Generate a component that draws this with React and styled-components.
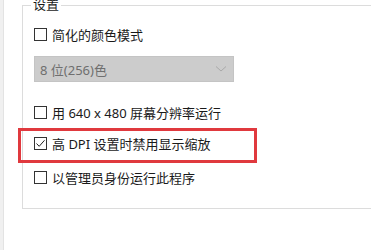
import React from 'react';
import styled, { createGlobalStyle } from 'styled-components';

const GlobalStyle = createGlobalStyle`
  html, body {
    margin: 0;
    padding: 0;
    background: #ffffff;
    overflow: hidden;
  }
  body {
    font-family: "Noto Sans", "Noto Sans CJK SC", sans-serif;
    font-size: 13px;
    color: #1a1a1a;
  }
`

const Page = styled.div`
  display: flex;
  width: 371px;
  height: 250px;
  overflow: hidden;
`

const Strip = styled.div`
  width: 3px;
  flex: none;
  background: #f0f0f0;
  border-right: 1px solid #e3e3e3;
`

const Main = styled.div`
  flex: 1;
  padding-left: 18px;
`

const Group = styled.div`
  position: relative;
  box-sizing: border-box;
  margin-top: 5px;
  width: 420px;
  height: 204px;
  border: 1px solid #dcdcdc;
  padding: 18px 0 0 11px;
`

const Legend = styled.span`
  position: absolute;
  top: -10px;
  left: 8px;
  padding: 0 2px;
  background: #ffffff;
  line-height: 17px;
`

const Row = styled.label`
  display: flex;
  align-items: center;
  gap: 5px;
  height: 20px;
  margin-top: ${({ gap }) => gap || 0}px;
  white-space: nowrap;
`

const Box = styled.span`
  box-sizing: border-box;
  display: flex;
  align-items: center;
  justify-content: center;
  width: 13px;
  height: 13px;
  border: 1px solid #333333;
  background: #ffffff;
  flex: none;
`

const Select = styled.div`
  box-sizing: border-box;
  display: flex;
  align-items: center;
  justify-content: space-between;
  width: 200px;
  height: 26px;
  margin-top: 12px;
  padding: 0 6px 0 5px;
  background: #cccccc;
  border: 1px solid #c4c4c4;
  color: #6f6f6f;
`

const Highlight = styled.div`
  box-sizing: border-box;
  width: 239px;
  margin: 6px 0 0 -16px;
  padding: 2px 0 7px 13px;
  border: 3px solid #e0393e;
`

const CheckBox = ({ checked }) => (
  <Box>
    {checked && (
      <svg width="11" height="11" viewBox="0 0 11 11">
        <path d="M1.5 5.5 L4.2 8.3 L9.5 2.3" fill="none" stroke="#222" strokeWidth="1" />
      </svg>
    )}
  </Box>
)

const Option = ({ checked, gap, children }) => (
  <Row gap={gap}>
    <CheckBox checked={checked} />
    <span>{children}</span>
  </Row>
)

export default function App() {
  return (
    <>
      <GlobalStyle />
      <Page>
        <Strip />
        <Main>
          <Group>
            <Legend>设置</Legend>
            <Option>简化的颜色模式</Option>
            <Select>
              <span>8 位(256)色</span>
              <svg width="12" height="8" viewBox="0 0 12 8">
                <path d="M1 1.5 L6 6 L11 1.5" fill="none" stroke="#a9a9a9" strokeWidth="1" />
              </svg>
            </Select>
            <Option gap={20}>用 640 x 480 屏幕分辨率运行</Option>
            <Highlight>
              <Option checked>高 DPI 设置时禁用显示缩放</Option>
            </Highlight>
            <Option gap={4}>以管理员身份运行此程序</Option>
          </Group>
        </Main>
      </Page>
    </>
  );
}
